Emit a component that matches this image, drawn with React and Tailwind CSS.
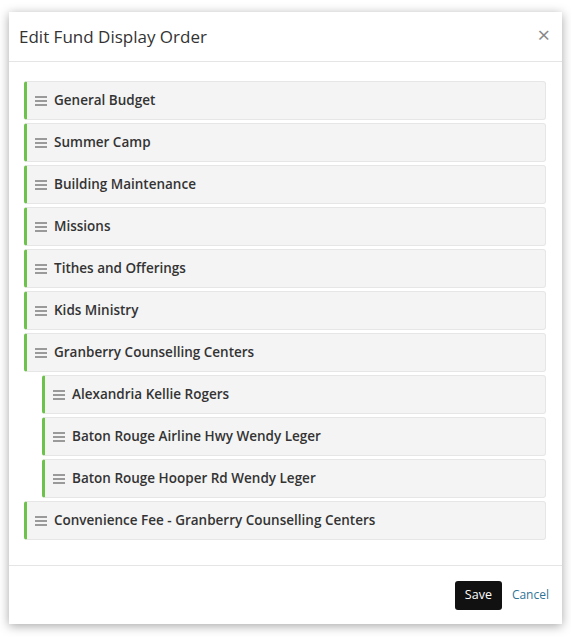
import React from 'react'

const funds = [
  { name: 'General Budget' },
  { name: 'Summer Camp' },
  { name: 'Building Maintenance' },
  { name: 'Missions' },
  { name: 'Tithes and Offerings' },
  { name: 'Kids Ministry' },
  { name: 'Granberry Counselling Centers' },
  { name: 'Alexandria Kellie Rogers', child: true },
  { name: 'Baton Rouge Airline Hwy Wendy Leger', child: true },
  { name: 'Baton Rouge Hooper Rd Wendy Leger', child: true },
  { name: 'Convenience Fee - Granberry Counselling Centers' },
]

function Handle() {
  return (
    <svg width="12" height="10" viewBox="0 0 12 10" className="shrink-0">
      <rect x="0" y="0" width="12" height="2" fill="#9a9a9a" />
      <rect x="0" y="4" width="12" height="2" fill="#9a9a9a" />
      <rect x="0" y="8" width="12" height="2" fill="#9a9a9a" />
    </svg>
  )
}

export default function App() {
  return (
    <div className="min-h-[637px] bg-white pt-3 pl-[9px]" style={{ fontFamily: '"Open Sans", sans-serif' }}>
      <div className="w-[553px] h-[612px] bg-white flex flex-col shadow-[0_2px_10px_rgba(0,0,0,0.35)]">
        {/* header */}
        <div className="h-[50px] flex items-center justify-between pl-[10px] pr-[12px] border-b border-[#e5e5e5]">
          <h2 className="text-[17px] text-[#333] leading-none">Edit Fund Display Order</h2>
          <span className="text-[22px] leading-none text-[#888] -mt-[5px]">×</span>
        </div>

        {/* body */}
        <div className="flex-1 pl-[15px] pr-[16px] pt-[19px] border-b border-[#e5e5e5]">
          <div className="flex flex-col gap-[3px]">
            {funds.map(f => (
              <div key={f.name}
                className={`h-[39px] flex items-center gap-[7px] pl-[8px] bg-[#f4f4f4] border border-[#e6e6e6] border-l-[3px] border-l-[#6cc24a] rounded-[3px] ${f.child ? 'ml-[18px]' : ''}`}>
                <Handle />
                <span className="text-[13.5px] font-semibold text-[#333]">{f.name}</span>
              </div>
            ))}
          </div>
        </div>

        {/* footer */}
        <div className="h-[58px] flex items-center justify-end gap-[10px] pr-[13px]">
          <button className="h-[29px] w-[47px] bg-[#111] text-white text-[12.5px] rounded-[3px]">Save</button>
          <span className="text-[12px] text-[#2f7497]">Cancel</span>
        </div>
      </div>
    </div>
  )
}
